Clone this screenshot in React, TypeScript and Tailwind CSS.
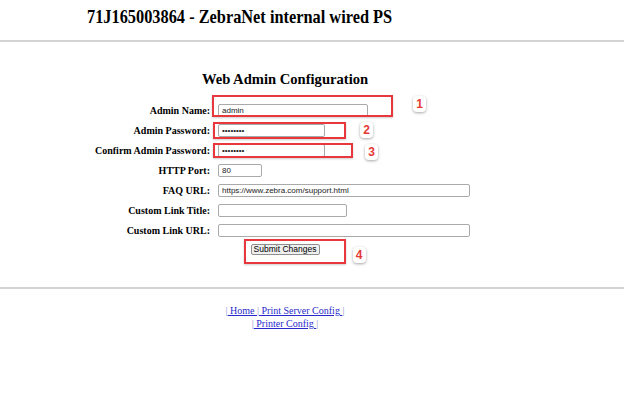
import React from "react";

const serif = "font-['Liberation_Serif',serif]";
const sans = "font-['Liberation_Sans',Arial,sans-serif]";

type Mark = { left: number; top: number; width: number; height: number };

const Callout = ({ n, left, top }: { n: number; left: number; top: number }) => (
  <span
    className={`absolute flex h-[16px] w-[13px] items-center justify-center rounded-[4px] bg-white text-[12px] font-bold leading-none text-[#e53935] shadow-[0_1px_3px_rgba(0,0,0,0.35)] ${sans}`}
    style={{ left, top }}
  >
    {n}
  </span>
);

const RedBox = ({ box }: { box: Mark }) => (
  <span
    className="pointer-events-none absolute border-2 border-[#e8383d] shadow-[0_1px_2px_rgba(0,0,0,0.2)]"
    style={box}
  />
);

type Row = {
  label: string;
  width: number;
  value?: string;
  type?: string;
  box?: Mark;
  badge?: { n: number; left: number; top: number };
};

const rows: Row[] = [
  {
    label: "Admin Name:",
    width: 150,
    value: "admin",
    box: { left: -6, top: -9, width: 181, height: 22 },
    badge: { n: 1, left: 195, top: -8 },
  },
  {
    label: "Admin Password:",
    width: 107,
    value: "password",
    type: "password",
    box: { left: -5, top: -2, width: 133, height: 17 },
    badge: { n: 2, left: 142, top: -2 },
  },
  {
    label: "Confirm Admin Password:",
    width: 107,
    value: "password",
    type: "password",
    box: { left: -5, top: -1, width: 140, height: 15 },
    badge: { n: 3, left: 147, top: 0 },
  },
  { label: "HTTP Port:", width: 44, value: "80" },
  { label: "FAQ URL:", width: 252, value: "https://www.zebra.com/support.html" },
  { label: "Custom Link Title:", width: 129 },
  { label: "Custom Link URL:", width: 252 },
];

const Field = ({ row }: { row: Row }) => (
  <div className="flex h-[20px] items-center">
    <div className={`w-[210px] text-right text-[10px] font-bold text-black ${serif}`}>{row.label}</div>
    <div className="relative ml-[8px] flex">
      <input
        readOnly
        type={row.type ?? "text"}
        value={row.value ?? ""}
        className={`h-[13px] rounded-[2px] border border-[#a9a9a9] bg-white px-[3px] text-[8px] text-[#222] outline-none ${sans}`}
        style={{ width: row.width }}
      />
      {row.box && <RedBox box={row.box} />}
      {row.badge && <Callout {...row.badge} />}
    </div>
  </div>
);

const Sep = () => <span className="text-[#8c8cd0]">|</span>;

export default function App() {
  return (
    <div className="h-[415px] w-[624px] overflow-hidden bg-white text-black">
      <div className="h-[40px] pl-[87px] pt-[6px]">
        <h1 className={`origin-left scale-x-[0.86] whitespace-nowrap text-[19px] font-bold leading-[22px] ${serif}`}>
          71J165003864 - ZebraNet internal wired PS
        </h1>
      </div>
      <div className="h-[2px] bg-[#d3d3d3]" />

      <div className="w-[570px]">
        <h2 className={`mt-[28px] h-[19px] text-center text-[14.6px] font-bold leading-[19px] ${serif}`}>
          Web Admin Configuration
        </h2>

        <div className="mt-[11px]">
          {rows.map((r) => (
            <Field key={r.label} row={r} />
          ))}
        </div>

        <div className="mt-[4px] flex justify-center">
          <div className="relative flex">
            <button
              className={`flex h-[11px] w-[69px] items-center justify-center whitespace-nowrap rounded-[2px] border border-[#8f8f8f] bg-[#efefef] px-0 text-[8.5px] leading-none text-black ${sans}`}
            >
              Submit Changes
            </button>
            <RedBox box={{ left: -7, top: -5, width: 102, height: 25 }} />
            <Callout n={4} left={102} top={3} />
          </div>
        </div>
      </div>

      <div className="mt-[32px] h-[2px] bg-[#d3d3d3]" />

      <div className={`w-[570px] pt-[15px] text-center text-[10px] leading-[13px] ${serif}`}>
        <div>
          <Sep />
          <a className="text-[#2a2acc] underline">&nbsp;Home&nbsp;</a>
          <Sep />
          <a className="text-[#2a2acc] underline">&nbsp;Print Server Config&nbsp;</a>
          <Sep />
        </div>
        <div>
          <Sep />
          <a className="text-[#2a2acc] underline">&nbsp;Printer Config&nbsp;</a>
          <Sep />
        </div>
      </div>
    </div>
  );
}
